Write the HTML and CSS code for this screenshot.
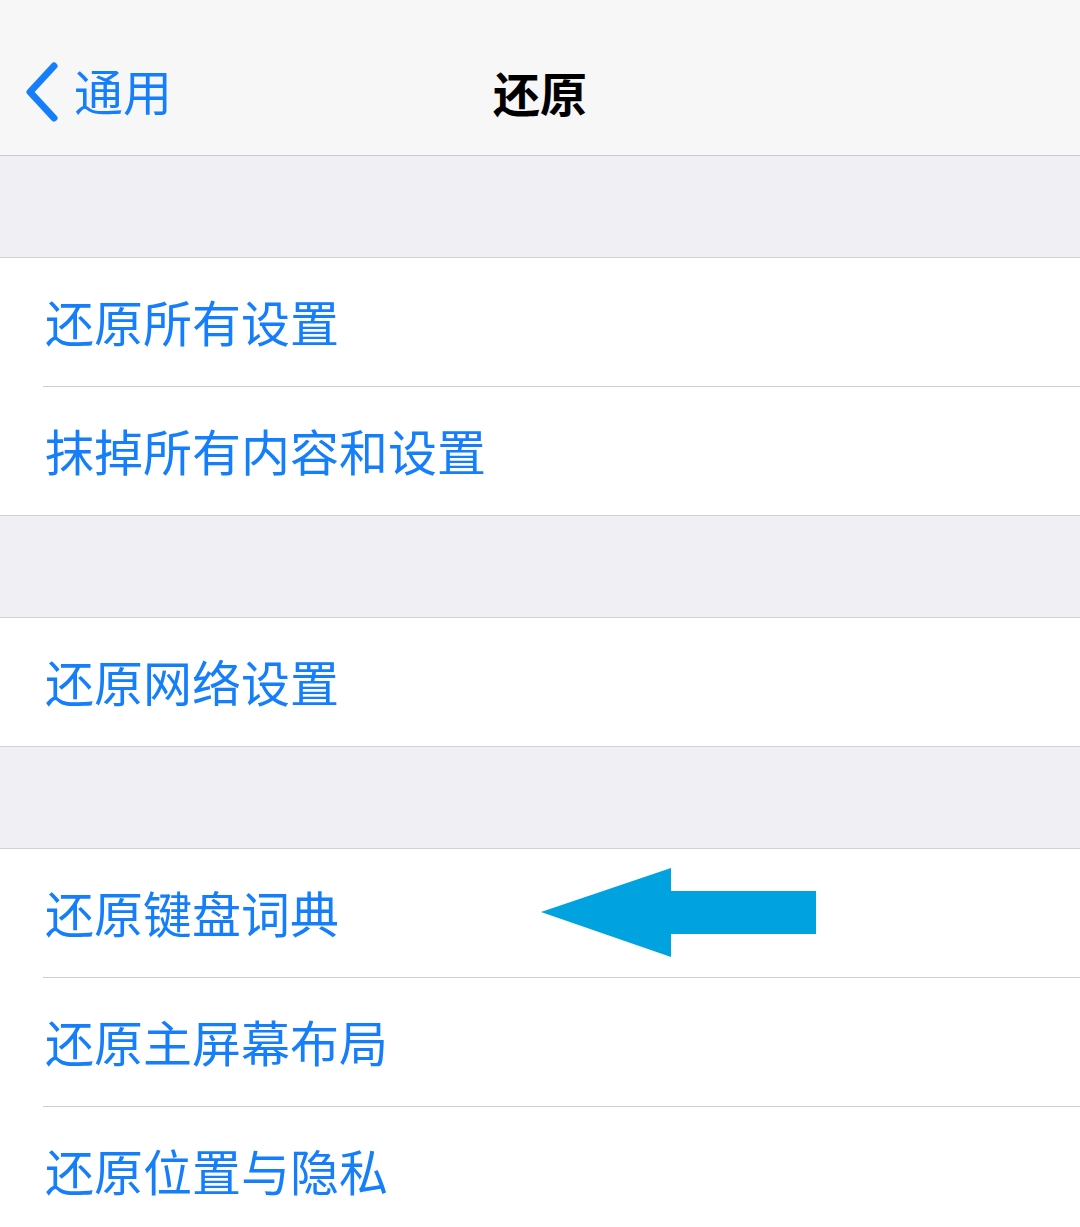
FILE: index.html
```html
<!DOCTYPE html>
<html lang="zh-CN">
<head>
<meta charset="utf-8">
<title>还原</title>
<link rel="stylesheet" href="styles.css">
</head>
<body>
<div class="screen">
  <header class="navbar">
    <div class="back">
      <svg class="chevron" width="40" height="64" viewBox="0 0 40 64">
        <path d="M32 6 L8 32 L32 58" fill="none" stroke="#157efb" stroke-width="7" stroke-linecap="round" stroke-linejoin="round"/>
      </svg>
      <span class="back-label">通用</span>
    </div>
    <h1 class="title">还原</h1>
  </header>

  <div class="gap"></div>
  <section class="group">
    <div class="cell">还原所有设置</div>
    <div class="sep"></div>
    <div class="cell">抹掉所有内容和设置</div>
  </section>

  <div class="gap"></div>
  <section class="group">
    <div class="cell">还原网络设置</div>
  </section>

  <div class="gap"></div>
  <section class="group">
    <div class="cell cell-marked">还原键盘词典
      <svg class="pointer" width="276" height="90" viewBox="0 0 276 90">
        <polygon points="0,44 130,0 130,23 275,23 275,66 130,66 130,89" fill="#00a2df"/>
      </svg>
    </div>
    <div class="sep"></div>
    <div class="cell">还原主屏幕布局</div>
    <div class="sep"></div>
    <div class="cell">还原位置与隐私</div>
  </section>
</div>
</body>
</html>
```

FILE: styles.css
```css
* { box-sizing: border-box; }

html, body {
  margin: 0;
  padding: 0;
}

body {
  background: #efeff4;
  font-family: "Noto Sans CJK SC", "Noto Sans", sans-serif;
}

.screen {
  width: 1080px;
  height: 1227px;
  overflow: hidden;
  background: #efeff4;
}

.navbar {
  height: 156px;
  background: #f7f7f8;
  border-bottom: 1px solid #c9c9ce;
  display: flex;
  justify-content: center;
  padding-top: 64px;
  position: relative;
}

.back {
  position: absolute;
  left: 22px;
  top: 60px;
  display: flex;
  align-items: center;
  gap: 12px;
}

.chevron { display: block; }

.back-label {
  font-size: 49px;
  color: #157efb;
  line-height: 58px;
  margin-top: -4px;
}

.title {
  margin: 0;
  font-size: 47px;
  font-weight: 600;
  color: #000;
  line-height: 56px;
}

.gap {
  height: 101px;
}

.group {
  background: #fff;
  border-top: 1px solid #d0d0d5;
  border-bottom: 1px solid #d0d0d5;
}

.cell {
  height: 128px;
  display: flex;
  align-items: center;
  padding-left: 45px;
  padding-bottom: 4px;
  font-size: 49px;
  color: #157efb;
  position: relative;
}

.cell-marked .pointer {
  position: absolute;
  left: 541px;
  top: 19px;
}

.sep {
  height: 1px;
  margin-left: 43px;
  background: #cfcfd3;
}
```
